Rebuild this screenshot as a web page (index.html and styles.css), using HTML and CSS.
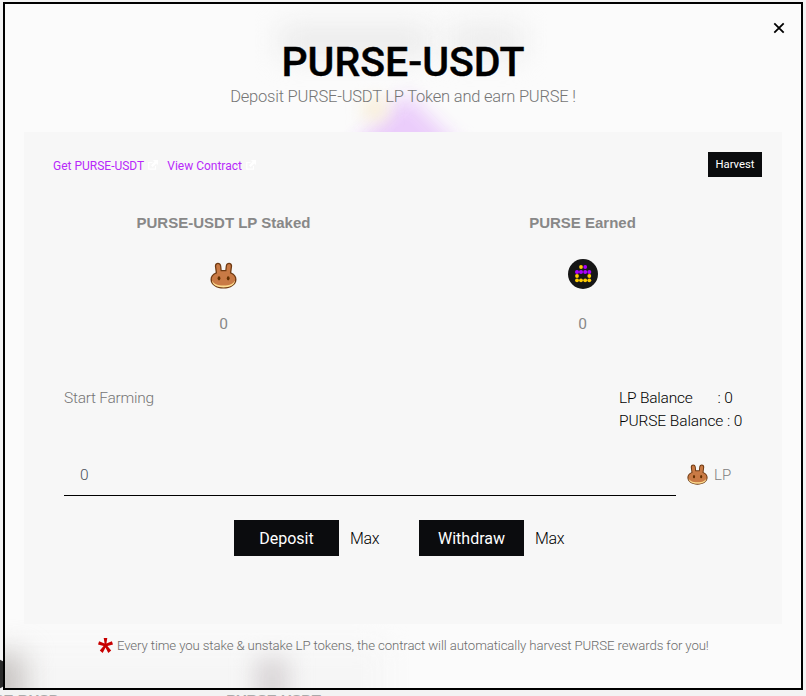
FILE: index.html
```html
<!DOCTYPE html>
<html lang="en">
<head>
<meta charset="utf-8">
<title>PURSE-USDT</title>
<link rel="stylesheet" href="styles.css">
</head>
<body>
<svg class="defs" width="0" height="0" aria-hidden="true">
  <symbol id="bunny" viewBox="0 0 27 27">
    <path d="M5.700 10.500L4.900 4.500C4.300-.1 10.800-.6 11.300 4L11.700 8H15.300L15.700 4C16.200-.6 22.800-.1 22.100 4.500L21.300 10.500C24.800 12 26.500 14.500 26.500 17.500C26.500 23 20.500 26.600 13.500 26.600S.5 23 .5 17.500C.5 14.500 2.200 12 5.700 10.500Z" fill="#6f3a12"/>
    <path d="M2 18.500C2 23 7.500 25.400 13.500 25.400S25 23 25 18.500Z" fill="#fedc90"/>
    <path d="M7.100 11.200L6.200 4.500C5.900 1.200 9.600 1 10.100 4.200L10.600 9.200H16.400L16.900 4.200C17.400 1 21.100 1.200 20.800 4.500L19.900 11.200C23 12.500 25.200 14.300 25.200 17C25.200 21.300 19.500 23.600 13.500 23.600S1.800 21.300 1.800 17C1.800 14.300 4 12.500 7.100 11.200Z" fill="#c97a45"/>
    <ellipse cx="9" cy="16.300" rx="1.400" ry="2.100" fill="#633001"/>
    <ellipse cx="18.200" cy="16.300" rx="1.400" ry="2.100" fill="#633001"/>
  </symbol>
  <symbol id="external" viewBox="0 0 10 10">
    <path d="M4.500 2.500H.8V9.200H7.500V6" fill="none" stroke="#fff" stroke-width="1.200"/>
    <path d="M5 0H10V5L8.300 3.600L4.600 7L3 5.400L6.500 1.700Z" fill="#fff"/>
  </symbol>
</svg>
<div class="backdrop">
  <div class="behind"><span>PURSE-BUSD</span><span>PURSE-USDT</span></div>
  <i class="token"></i>
</div>
<main class="modal">
  <div class="glows"><i class="glow title-left"></i><i class="glow title-right"></i><i class="glow violet"></i><i class="glow cream"></i><i class="glow card"></i><i class="glow corner"></i><i class="glow bottom"></i></div>
  <button class="close" aria-label="Close"><svg width="12" height="12" viewBox="0 0 12 12"><path d="M1.300 1.300L10.700 10.700M10.700 1.300L1.300 10.700" stroke="#000" stroke-width="1.800"/></svg></button>
  <h1>PURSE-USDT</h1>
  <p class="subtitle">Deposit PURSE-USDT LP Token and earn PURSE !</p>
  <section class="panel">
    <div class="top">
      <nav class="links">
        <a>Get PURSE-USDT<svg width="10" height="10"><use href="#external"/></svg></a>
        <a>View Contract<svg width="10" height="10"><use href="#external"/></svg></a>
      </nav>
      <button class="harvest">Harvest</button>
    </div>
    <div class="stats">
      <div class="stat">
        <h2>PURSE-USDT LP Staked</h2>
        <div class="icon"><svg class="big-bunny" width="27" height="27"><use href="#bunny"/></svg></div>
        <span>0</span>
      </div>
      <div class="stat">
        <h2>PURSE Earned</h2>
        <div class="icon"><svg width="30" height="30" viewBox="0 0 30 30">
          <circle cx="15" cy="15" r="15" fill="#161616"/>
          <g fill="#fc0"><circle cx="13" cy="8" r="1.900"/><circle cx="9" cy="17" r="1.900"/><circle cx="21.300" cy="17" r="1.900"/><circle cx="9" cy="21.300" r="1.900"/><circle cx="13" cy="21.300" r="1.900"/><circle cx="17.200" cy="21.300" r="1.900"/><circle cx="21.300" cy="21.300" r="1.900"/></g>
          <g fill="#a0f"><circle cx="17.200" cy="8" r="1.900"/><circle cx="9" cy="13" r="2"/><circle cx="13" cy="13" r="2"/><circle cx="17.200" cy="13" r="2"/><circle cx="21.300" cy="13" r="2"/></g>
        </svg></div>
        <span>0</span>
      </div>
    </div>
    <div class="farm">
      <span class="start">Start Farming</span>
      <div class="balances">
        <div><span class="lp-name">LP Balance</span>: 0</div>
        <div>PURSE Balance : 0</div>
      </div>
    </div>
    <div class="entry">
      <div class="amount">0</div>
      <svg width="21" height="21"><use href="#bunny"/></svg>
      <span>LP</span>
    </div>
    <div class="actions">
      <button class="main">Deposit</button><button class="max">Max</button>
      <button class="main">Withdraw</button><button class="max">Max</button>
    </div>
  </section>
  <footer>
    <svg width="15" height="15" viewBox="0 0 15 15"><path d="M5.700 0H9.300L8.400 5.600L13.900 3.300L15 6.600L9.400 7.900L13.200 12.500L10.300 14.900L7.500 9.400L4.700 14.900L1.800 12.500L5.600 7.900L0 6.600L1.100 3.300L6.600 5.600Z" fill="#c80000"/></svg>
    <span>Every time you stake &amp; unstake LP tokens, the contract will automatically harvest PURSE rewards for you!</span>
  </footer>
</main>
</body>
</html>
```
FILE: styles.css
```css
* { box-sizing: border-box; }
body {
  margin: 0;
  height: 696px;
  overflow: hidden;
  padding: 2px 3px;
  background: #f3f3f3;
  font-family: Roboto, "Liberation Sans", sans-serif;
  font-weight: 300;
  color: #000;
}
h1, h2, p { margin: 0; }
button { border: 0; padding: 0; background: none; font: inherit; color: inherit; }
svg { display: block; flex: none; }
.defs, .backdrop { position: absolute; }
.backdrop { inset: 0; overflow: hidden; }
.behind {
  position: absolute;
  top: 690px;
  left: -37px;
  display: flex;
  gap: 167px;
  font: bold 15px/20px "Liberation Sans", sans-serif;
  letter-spacing: -.3px;
  color: #aaa;
}
.token {
  position: absolute;
  left: -20px;
  top: 659px;
  width: 30px;
  height: 30px;
  border-radius: 50%;
  background: #292929;
}
.modal {
  position: relative;
  width: 800px;
  height: 688px;
  border: 2px solid #000;
  padding: 36px 19px 0;
  background: #fbfbfb;
}
/* soft colour spots seen through the frosted dialog */
.glows { position: absolute; inset: 0; overflow: hidden; }
.glow { position: absolute; filter: blur(14px); }
.title-left { left: 275px; top: 22px; width: 150px; height: 30px; background: #eaeaea; }
.title-right { left: 445px; top: 22px; width: 72px; height: 30px; background: #ebebeb; }
.cream { left: 358px; top: 94px; width: 24px; height: 22px; background: #f8efda; filter: blur(8px); }
.violet { left: 363px; top: 105px; width: 76px; height: 76px; background: #ebcdfb; transform: rotate(45deg); filter: blur(10px); }
.card { left: -20px; top: 640px; width: 400px; height: 70px; background: #f6f6f6; }
.corner { left: -40px; top: 650px; width: 60px; height: 60px; background: #c9c5c3; }
.bottom { left: 250px; top: 654px; width: 34px; height: 50px; background: #dad6d8; filter: blur(11px); }
.close { position: absolute; top: 17.500px; right: 16.500px; }
h1 {
  position: relative;
  font-size: 41px;
  line-height: 44px;
  height: 44px;
  font-weight: 500;
  -webkit-text-stroke: .4px #000;
  text-align: center;
}
.subtitle {
  position: relative;
  height: 48px;
  font-size: 16.500px;
  line-height: 26px;
  letter-spacing: -.22px;
  text-align: center;
  color: #757575;
  white-space: nowrap;
}
.panel {
  position: relative;
  height: 492px;
  padding: 20px 20px 0;
  background: #f7f7f7;
}
.top { display: flex; justify-content: space-between; height: 25px; }
.links { display: flex; gap: 9px; padding: 7px 0 0 9px; font-size: 12px; line-height: 14px; font-weight: 400; color: #b829fa; }
.links a { display: flex; gap: 4px; }
.links svg { margin-top: 1px; }
.harvest { width: 54px; background: #0b0c0e; color: #fff; font-size: 11.300px; font-weight: 400; }
.stats { display: grid; grid-template-columns: 1fr 1fr; height: 208px; padding-top: 36px; }
.stat { display: flex; flex-direction: column; align-items: center; color: #888; font-size: 15.500px; line-height: 21px; font-weight: 400; }
.stat h2 { font: bold 15px/20px "Liberation Sans", sans-serif; }
.icon { height: 81px; display: flex; align-items: center; }
.big-bunny { margin-top: 4px; }
.farm { display: flex; justify-content: space-between; height: 69px; padding: 2px 20px 0; font-size: 15.500px; line-height: 23px; }
.start { color: #757575; letter-spacing: -.25px; }
.balances { letter-spacing: -.1px; width: 123px; white-space: nowrap; }
.lp-name { display: inline-block; width: 98.500px; letter-spacing: -.2px; }
.entry { display: flex; align-items: center; height: 42px; padding-left: 20px; color: #808080; font-size: 15px; }
.amount { width: 612px; height: 42px; padding-left: 16px; margin-right: 11px; border-bottom: 1px solid #000; line-height: 43px; font-size: 15.500px; color: #4b525b; }
.entry svg { margin-top: -2px; }
.entry span { margin-left: 6px; }
.actions { display: flex; padding: 24px 0 0 190px; font-size: 16.500px; }
.main { width: 105px; height: 36px; background: #0b0c0e; color: #fff; font-weight: 400; font-size: 16px; letter-spacing: 0; }
.max { margin: 0 40px 0 11px; width: 29px; font-size: 16px; letter-spacing: -.3px; }
.max:last-child { margin-right: 0; }
footer { position: relative; display: flex; align-items: center; gap: 4px; height: 43px; padding-left: 74px; font-size: 13.200px; letter-spacing: -.11px; color: #6c6c6c; white-space: nowrap; }
```
